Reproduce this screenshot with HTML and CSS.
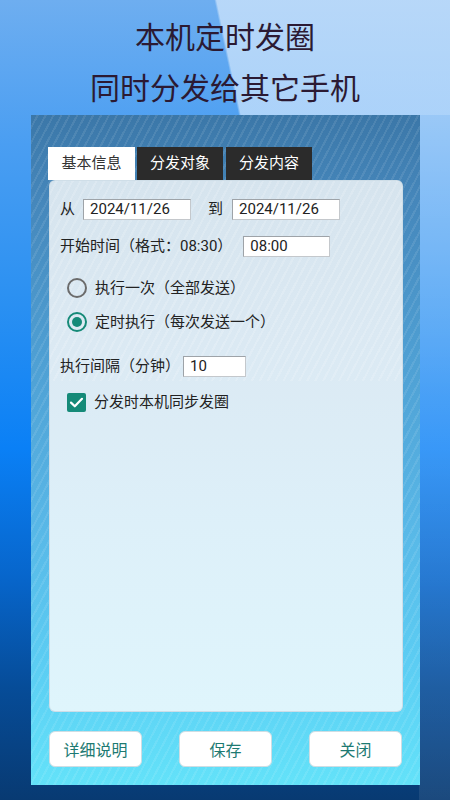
FILE: index.html
```html
<!DOCTYPE html>
<html lang="zh-CN">
<head>
<meta charset="utf-8">
<title>本机定时发圈</title>
<link rel="stylesheet" href="styles.css">
</head>
<body>
<header class="hero">
  <p class="hero-line">本机定时发圈</p>
  <p class="hero-line">同时分发给其它手机</p>
</header>
<main class="frame">
  <nav class="tabs">
    <div class="tab tab-active">基本信息</div>
    <div class="tab tab-dark tab-2">分发对象</div>
    <div class="tab tab-dark tab-3">分发内容</div>
  </nav>
  <section class="panel">
    <div class="row r-dates">
      <span class="label">从</span>
      <span class="input in-date in-from">2024/11/26</span>
      <span class="label to">到</span>
      <span class="input in-date in-to">2024/11/26</span>
    </div>
    <div class="row r-start">
      <span class="label">开始时间（格式：08:30）</span>
      <span class="input in-time">08:00</span>
    </div>
    <div class="row radio-row r-radio1">
      <svg class="radio" width="22" height="22" viewBox="0 0 22 22"><circle cx="11" cy="11" r="9" fill="none" stroke="#6b6b6b" stroke-width="2"/></svg>
      <span class="label">执行一次（全部发送）</span>
    </div>
    <div class="row radio-row r-radio2">
      <svg class="radio" width="22" height="22" viewBox="0 0 22 22"><circle cx="11" cy="11" r="9" fill="none" stroke="#158a78" stroke-width="2"/><circle cx="11" cy="11" r="5" fill="#158a78"/></svg>
      <span class="label">定时执行（每次发送一个）</span>
    </div>
    <div class="row r-interval">
      <span class="label">执行间隔（分钟）</span>
      <span class="input in-interval">10</span>
    </div>
    <div class="row check-row r-check">
      <svg class="check" width="19" height="19" viewBox="0 0 19 19"><rect x="0" y="0" width="19" height="19" rx="2" fill="#158a78"/><path d="M4 9.6 L7.8 13.3 L15 5.8" fill="none" stroke="#fff" stroke-width="2.2" stroke-linecap="round" stroke-linejoin="round"/></svg>
      <span class="label">分发时本机同步发圈</span>
    </div>
  </section>
  <div class="actions">
    <button class="btn" type="button">详细说明</button>
    <button class="btn" type="button">保存</button>
    <button class="btn" type="button">关闭</button>
  </div>
</main>
</body>
</html>
```
FILE: styles.css
```css
* { box-sizing: border-box; }
html, body { margin: 0; padding: 0; }
body {
  width: 450px;
  height: 800px;
  overflow: hidden;
  font-family: Roboto, "Noto Sans CJK SC", sans-serif;
  background:
    linear-gradient(78deg, rgba(255,255,255,0) 50.3%, rgba(232,243,255,0.6) 50.8%, rgba(232,243,255,0.6) 100%) left top / 100% 115px no-repeat,
    linear-gradient(to bottom, rgba(255,255,255,0.42) 0%, rgba(255,255,255,0.22) 40%, rgba(255,255,255,0.12) 70%, rgba(255,255,255,0.08) 100%) right 0 top 115px / 31px 685px no-repeat,
    linear-gradient(to bottom, #6eaef0 0%, #4a9ef2 18%, #2a90f2 38%, #0a80f6 56%, #0766cc 72%, #064c98 86%, #083a72 100%);
}

.hero {
  height: 115px;
  padding-top: 10px;
}
.hero-line {
  margin: 0;
  text-align: center;
  font-family: "Noto Sans CJK SC", sans-serif;
  font-size: 30px;
  line-height: 51px;
  color: #2b1a33;
  font-weight: 400;
}

.frame {
  margin-left: 31px;
  width: 389px;
  height: 670px;
  padding: 32px 17px 18px 18px;
  display: flex;
  flex-direction: column;
  background:
    repeating-linear-gradient(118deg, rgba(255,255,255,0) 0px, rgba(255,255,255,0) 5px, rgba(255,255,255,0.09) 5px, rgba(255,255,255,0.09) 7px),
    linear-gradient(to bottom, #3b77a8 0%, #4586ba 12%, #4e9ed2 35%, #58b6e6 60%, #5ccdf3 82%, #63e2f9 100%);
}

.tabs {
  display: flex;
  height: 33px;
  margin-left: -1px;
}
.tab {
  height: 33px;
  line-height: 33px;
  font-size: 15px;
  text-align: center;
}
.tab-active {
  width: 87px;
  background: #ffffff;
  color: #333333;
}
.tab-dark {
  width: 86px;
  background: #2b2b2b;
  color: #ffffff;
}
.tab-2 { margin-left: 2px; }
.tab-3 { margin-left: 3px; }

.panel {
  width: 354px;
  height: 532px;
  border: 1px solid rgba(205,220,230,0.9);
  border-radius: 6px;
  padding: 18px 10px;
  display: flex;
  flex-direction: column;
  background:
    repeating-linear-gradient(118deg, rgba(255,255,255,0) 0px, rgba(255,255,255,0) 5px, rgba(255,255,255,0.16) 5px, rgba(255,255,255,0.16) 7px) left top / 100% 200px no-repeat,
    linear-gradient(to bottom, #d6e4ee 0%, #dbe9f3 30%, #ddf0f9 65%, #dff5fc 100%);
}

.row {
  display: flex;
  align-items: center;
  height: 21px;
  font-size: 15px;
  color: #222222;
}
.label { white-space: nowrap; line-height: 21px; }

.input {
  display: block;
  height: 21px;
  line-height: 19px;
  padding-left: 6px;
  background: #ffffff;
  border: 1px solid #c4c8cc;
  border-top-color: #9ea3a8;
  border-left-color: #9ea3a8;
  font-size: 15px;
  color: #222222;
}
.in-date { width: 108px; }
.in-from { margin-left: 8px; }
.to { margin-left: 17px; }
.in-to { margin-left: 9px; }
.in-time { width: 87px; margin-left: 11px; }
.in-interval { width: 63px; margin-left: 3px; }

.r-start { margin-top: 16px; }
.radio-row { height: 24px; padding-left: 6px; }
.r-radio1 { margin-top: 19px; }
.r-radio2 { margin-top: 10px; }
.radio { display: block; margin-right: 7px; }
.r-interval { margin-top: 22px; }
.check-row { height: 22px; padding-left: 7px; }
.r-check { margin-top: 14px; }
.check { display: block; margin-right: 8px; }

.actions {
  margin-top: 19px;
  width: 353px;
  display: flex;
  justify-content: space-between;
}
.btn {
  width: 93px;
  height: 36px;
  border: 1px solid #cfdde3;
  border-radius: 6px;
  background: #ffffff;
  color: #1d7a72;
  font-family: Roboto, "Noto Sans CJK SC", sans-serif;
  font-size: 16px;
  padding: 0;
}
```
